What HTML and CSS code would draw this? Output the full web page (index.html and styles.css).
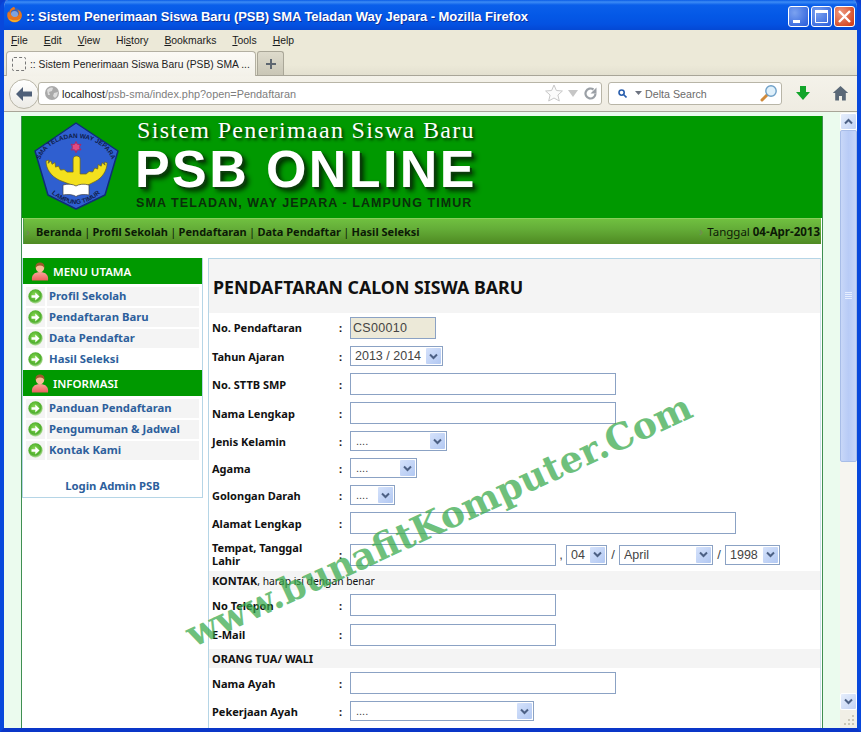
FILE: index.html
```html
<!DOCTYPE html>
<html lang="id">
<head>
<meta charset="utf-8">
<title>:: Sistem Penerimaan Siswa Baru (PSB) SMA Teladan Way Jepara</title>
<link rel="stylesheet" href="styles.css">
</head>
<body>
<svg class="defs" width="0" height="0">
  <defs>
    <radialGradient id="go" cx="45%" cy="40%" r="60%"><stop offset="0" stop-color="#8fdc58"/><stop offset=".7" stop-color="#4faf2c"/><stop offset="1" stop-color="#c5e6b0"/></radialGradient>
    <linearGradient id="skin" x1="0" y1="0" x2="0" y2="1"><stop offset="0" stop-color="#f9a49a"/><stop offset="1" stop-color="#e9605c"/></linearGradient>
    <symbol id="go-ico" viewBox="0 0 15 15"><circle cx="7.500" cy="7.500" r="7.200" fill="url(#go)"/><path d="M3.500 6.300h3.800V3.500l4.200 4-4.200 4V8.700H3.500z" fill="#fff"/></symbol>
    <symbol id="person" viewBox="0 0 20 19"><path d="M2 18.500c-.8-5 2-8.500 8-8.500s8.800 3.500 8 8.500z" fill="url(#skin)"/><circle cx="10" cy="6" r="4.200" fill="#f6bc98"/><path d="M5.600 6.500C5 2.500 7 .5 10 .5s5 2 4.400 6c-.6-2-2-3-4.400-3s-3.800 1-4.400 3z" fill="#9c5a2c"/></symbol>
    <symbol id="chev-d" viewBox="0 0 9 7"><path d="M1 1.500 4.500 5 8 1.500" fill="none" stroke="#4d6185" stroke-width="2"/></symbol>
  </defs>
</svg>
<div class="window">
  <div class="titlebar">
    <svg class="fx" width="18" height="18" viewBox="0 0 18 18"><circle cx="9" cy="9" r="7" fill="#3a62b4"/><circle cx="8.500" cy="8.500" r="3.600" fill="#7fa3de"/><path d="M8 .8c1 1 1.200 2 .6 2.900-2-.2-3.600 1-3.800 3-.2 2.400 1.800 4.400 4.300 4.300 2.300-.1 3.900-1.800 3.700-4-.1-1.500-1-2.600-2-3.300 3 .4 5 2.700 5.100 5.300.1 4-3.300 7.400-7.300 7.300C4.300 16.200 1.200 13 1.200 9.200c0-1.500.4-2.800 1.200-3.900.1.700.4 1.200.9 1.400C3.400 4 5.300 1.600 8 .8z" fill="#e8761c"/><path d="M2.600 12.500c1.500 2.300 4 3.600 6.700 3.400 2.500-.2 4.600-1.700 5.600-4-1.400 1.500-3.400 2.400-5.600 2.400-2.700 0-5-.6-6.700-1.800z" fill="#f5b52e"/></svg>
    <span class="title-text">:: Sistem Penerimaan Siswa Baru (PSB) SMA Teladan Way Jepara - Mozilla Firefox</span>
    <div class="winbtns">
      <span class="winbtn"><svg width="21" height="21" viewBox="0 0 21 21"><rect x="5" y="14" width="7" height="3" fill="#fff"/></svg></span>
      <span class="winbtn"><svg width="21" height="21" viewBox="0 0 21 21"><path d="M4.500 4.500h12v12h-12z" fill="none" stroke="#fff"/><rect x="4" y="4" width="13" height="3" fill="#fff"/></svg></span>
      <span class="winbtn close"><svg width="21" height="21" viewBox="0 0 21 21"><path d="M5 5l11 11M16 5 5 16" stroke="#fff" stroke-width="2.400"/></svg></span>
    </div>
  </div>
  <div class="menubar">
    <span><u>F</u>ile</span><span><u>E</u>dit</span><span><u>V</u>iew</span><span>Hi<u>s</u>tory</span><span><u>B</u>ookmarks</span><span><u>T</u>ools</span><span><u>H</u>elp</span>
  </div>
  <div class="tabstrip">
    <div class="tab"><span class="favicon"></span><span class="tab-label">:: Sistem Penerimaan Siswa Baru (PSB) SMA ...</span></div>
    <div class="newtab"><svg width="12" height="12" viewBox="0 0 12 12"><path d="M6 1v10M1 6h10" stroke="#5d6670" stroke-width="2"/></svg></div>
  </div>
  <div class="navbar">
    <span class="back"><svg width="18" height="16" viewBox="0 0 18 16"><path d="M8 1 1 8l7 7V10.500h9v-5H8z" fill="#4f6079"/></svg></span>
    <div class="urlbar">
      <svg class="globe" width="16" height="16" viewBox="0 0 16 16"><circle cx="8" cy="8" r="7" fill="#a9a9a9"/><path d="M3 5c2-2 4-3 6-2l-1 3-3 1 1 3-2 0zM10 8l4-1-1 4-2 2-2-2z" fill="#dcdcdc"/></svg>
      <span class="url"><span class="url-host">localhost</span>/psb-sma/index.php?open=Pendaftaran</span>
      <svg class="star" width="18" height="18" viewBox="0 0 18 18"><path d="m9 1 2.400 5.500 6 .5-4.500 4 1.400 6L9 14l-5.300 3 1.400-6L.6 7l6-.5z" fill="#fbfbfb" stroke="#c8c8c8"/></svg>
      <svg class="drop" width="10" height="7" viewBox="0 0 10 7"><path d="M0 0h10L5 7z" fill="#c6c6c6"/></svg>
      <svg class="reload" width="13" height="13" viewBox="0 0 13 13"><path d="M11.500 6.500a5 5 0 1 1-2-4" fill="none" stroke="#9ba0a6" stroke-width="2.200"/><path d="M12.500 .5v6h-6z" fill="#9ba0a6"/></svg>
    </div>
    <div class="searchbar">
      <svg class="engine" width="9" height="9" viewBox="0 0 9 9"><circle cx="3.600" cy="3.600" r="2.600" fill="none" stroke="#2a5fae" stroke-width="1.600"/><path d="m5.500 5.500 3 3" stroke="#2a5fae" stroke-width="1.600"/></svg>
      <svg class="engine-drop" width="7" height="4" viewBox="0 0 7 4"><path d="M0 0h7L3.500 4z" fill="#6d7380"/></svg>
      <span class="search-text">Delta Search</span>
      <svg class="lens" width="18" height="18" viewBox="0 0 18 18"><path d="M7 11 2 16" stroke="#d08a3a" stroke-width="3" stroke-linecap="round"/><circle cx="11" cy="7" r="5.200" fill="#dff0fb" stroke="#6fa0c8" stroke-width="1.400"/></svg>
    </div>
    <svg class="dl" width="16" height="16" viewBox="0 0 16 16"><path d="M5 1h6v6h4l-7 8-7-8h4z" fill="#12a52a"/></svg>
    <svg class="home" width="17" height="16" viewBox="0 0 17 16"><path d="M8.500 1 .8 8h2.400v7.500h3.800v-4.500h3v4.500h3.800V8h2.400z" fill="#5a6877"/></svg>
  </div>
  <div class="viewport">
    <div class="canvas">
      <div class="page">
        <header class="banner">
          <svg class="logo" width="92" height="92" viewBox="0 0 92 92">
            <path d="M45 2 87 30 74 74 45 88 17 74 4 30z" fill="#2f5fd0" stroke="#0f2c78" stroke-width="1.500" stroke-linejoin="round"/>
            <path id="arcTop" d="M8 46A37 29 0 0 1 82 46" fill="none"/>
            <path id="arcBot" d="M16 68Q45 98 74 68" fill="none"/>
            <text class="logo-text"><textPath href="#arcTop" startOffset="50%">SMA TELADAN WAY JEPARA</textPath></text>
            <text class="logo-text"><textPath href="#arcBot" startOffset="50%">LAMPUNG TIMUR</textPath></text>
            <circle cx="45" cy="26" r="3.600" fill="#e04a80"/>
            <path d="M45 20.500l1.500 3 3.500-.2-1.600 2.800 1.600 2.800-3.500-.2-1.500 3-1.500-3-3.500.2 1.600-2.800-1.600-2.800 3.500.2z" fill="none" stroke="#c41e50" stroke-width=".8"/>
            <path d="M15 40c1-.5 2-.8 3-.7l-1 3 3-2.500 1 3.500 3-1.700.5 4.500 3-1 2 4 3.600-.5 3 2.500h4l2 0V38c0-4 7-4 7 0v15h6l3-2.500 3.600.5 2-4 3 1 .5-4.500 3 1.700 1-3.500 3 2.500-1-3c1-.1 2 .2 3 .7-.5 8-5 15-12 18.500l-13 6.500h-3L28 59C20 55 15 48 15 40z" fill="#f3e01e" stroke="#6f6410" stroke-width=".7" stroke-linejoin="round"/>
            <path d="M32 64c5-1.500 10-.8 13 1 3-1.800 8-2.500 13-1v10c-5-1-10-.5-13 1.500-3-2-8-2.500-13-1.500z" fill="#fff" stroke="#444" stroke-width=".7"/>
          </svg>
          <div class="banner-text">
            <div class="banner-top">Sistem Penerimaan Siswa Baru</div>
            <div class="banner-main">PSB ONLINE</div>
            <div class="banner-sub">SMA TELADAN, WAY JEPARA - LAMPUNG TIMUR</div>
          </div>
        </header>
        <nav class="topnav">
          <div class="topnav-links"><i class="chev">›</i><span>Beranda</span><b>|</b><span>Profil Sekolah</span><b>|</b><span>Pendaftaran</span><b>|</b><span>Data Pendaftar</span><b>|</b><span>Hasil Seleksi</span></div>
          <div class="topnav-date"><i class="chev">›</i>Tanggal <strong>04-Apr-2013</strong></div>
        </nav>
        <div class="columns">
          <aside class="sidebar">
            <div class="side-head"><svg width="20" height="19"><use href="#person"/></svg>MENU UTAMA</div>
            <div class="side-item"><span class="ico"><svg width="15" height="15"><use href="#go-ico"/></svg></span><a>Profil Sekolah</a></div>
            <div class="side-item"><span class="ico"><svg width="15" height="15"><use href="#go-ico"/></svg></span><a>Pendaftaran Baru</a></div>
            <div class="side-item"><span class="ico"><svg width="15" height="15"><use href="#go-ico"/></svg></span><a>Data Pendaftar</a></div>
            <div class="side-item plain"><span class="ico"><svg width="15" height="15"><use href="#go-ico"/></svg></span><a>Hasil Seleksi</a></div>
            <div class="side-head"><svg width="20" height="19"><use href="#person"/></svg>INFORMASI</div>
            <div class="side-item"><span class="ico"><svg width="15" height="15"><use href="#go-ico"/></svg></span><a>Panduan Pendaftaran</a></div>
            <div class="side-item"><span class="ico"><svg width="15" height="15"><use href="#go-ico"/></svg></span><a>Pengumuman &amp; Jadwal</a></div>
            <div class="side-item"><span class="ico"><svg width="15" height="15"><use href="#go-ico"/></svg></span><a>Kontak Kami</a></div>
            <a class="login">Login Admin PSB</a>
          </aside>
          <main class="main">
            <h1 class="main-title">PENDAFTARAN CALON SISWA BARU</h1>
            <form class="form">
              <label>No. Pendaftaran</label><span class="colon">:</span><div><input class="inp w86 ro" value="CS00010" readonly></div>
              <label>Tahun Ajaran</label><span class="colon">:</span><div><span class="sel w93"><select><option>2013 / 2014</option></select><span class="arr"><svg width="9" height="7"><use href="#chev-d"/></svg></span></span></div>
              <label>No. STTB SMP</label><span class="colon">:</span><div><input class="inp w266"></div>
              <label>Nama Lengkap</label><span class="colon">:</span><div><input class="inp w266"></div>
              <label>Jenis Kelamin</label><span class="colon">:</span><div><span class="sel w97"><select class="dots"><option>....</option></select><span class="arr"><svg width="9" height="7"><use href="#chev-d"/></svg></span></span></div>
              <label>Agama</label><span class="colon">:</span><div><span class="sel w67"><select class="dots"><option>....</option></select><span class="arr"><svg width="9" height="7"><use href="#chev-d"/></svg></span></span></div>
              <label>Golongan Darah</label><span class="colon">:</span><div><span class="sel w45"><select class="dots"><option>....</option></select><span class="arr"><svg width="9" height="7"><use href="#chev-d"/></svg></span></span></div>
              <label>Alamat Lengkap</label><span class="colon">:</span><div><input class="inp w386"></div>
              <label class="label-two">Tempat, Tanggal Lahir</label><span class="colon">:</span>
              <div class="date-row"><input class="inp w206"><span class="sep sep-c">,</span><span class="sel w41"><select><option>04</option></select><span class="arr"><svg width="9" height="7"><use href="#chev-d"/></svg></span></span><span class="sep">/</span><span class="sel w94"><select><option>April</option></select><span class="arr"><svg width="9" height="7"><use href="#chev-d"/></svg></span></span><span class="sep">/</span><span class="sel w55"><select><option>1998</option></select><span class="arr"><svg width="9" height="7"><use href="#chev-d"/></svg></span></span></div>
              <div class="band"><strong>KONTAK</strong><span class="band-note">, harap isi dengan benar</span></div>
              <label>No Telepon</label><span class="colon">:</span><div><input class="inp w206"></div>
              <label>E-Mail</label><span class="colon">:</span><div><input class="inp w206"></div>
              <div class="band"><strong>ORANG TUA/ WALI</strong></div>
              <label>Nama Ayah</label><span class="colon">:</span><div><input class="inp w266"></div>
              <label>Pekerjaan Ayah</label><span class="colon">:</span><div><span class="sel w184"><select class="dots"><option>....</option></select><span class="arr"><svg width="9" height="7"><use href="#chev-d"/></svg></span></span></div>
            </form>
          </main>
        </div>
      </div>
      <div class="watermark">www.bunafitKomputer.Com</div>
    </div>
    <div class="scrollbar">
      <span class="sb-btn"><svg width="9" height="7" viewBox="0 0 9 7"><path d="M1 5.500 4.500 2 8 5.500" fill="none" stroke="#4d6185" stroke-width="2"/></svg></span>
      <span class="sb-thumb"><svg width="7" height="8" viewBox="0 0 7 8"><path d="M0 .5h7M0 2.500h7M0 4.500h7M0 6.500h7" stroke="#e6eeff"/></svg></span>
      <span class="sb-track"></span>
      <span class="sb-btn"><svg width="9" height="7"><use href="#chev-d"/></svg></span>
      <span class="sb-corner"><svg width="11" height="11" viewBox="0 0 11 11"><path d="M8 1h2v2H8zM4 5h2v2H4zM8 5h2v2H8zM0 9h2v2H0zM4 9h2v2H4zM8 9h2v2H8z" fill="#c9c6b8"/></svg></span>
    </div>
  </div>
</div>
</body>
</html>
```

FILE: styles.css
```css
* { box-sizing: border-box; }
html, body { margin: 0; padding: 0; height: 732px; overflow: hidden; }
body { font-family: "Noto Sans", sans-serif; background: #0a3fd0; }
.defs { display: block; height: 0; }

.window {
  width: 861px; height: 732px;
  border: 4px solid #0848dc; border-top: 0;
  border-bottom-color: #0a36c8;
  border-radius: 8px 8px 0 0;
  display: flex; flex-direction: column; overflow: hidden;
  background: #ece9d8;
}

/* title bar */
.titlebar {
  height: 30px; flex: none; margin: 0 -4px;
  padding: 0 6px 0 6px;
  background: linear-gradient(#0a5be6 0, #3d8cf5 2px, #0a5fea 5px, #0458e6 16px, #0452e2 24px, #0448d4 30px);
  display: flex; align-items: center; position: relative;
}
.fx { flex: none; }
.title-text {
  color: #fff; font: bold 13px "Liberation Sans", sans-serif; letter-spacing: -.05px;
  margin-left: 2px; padding-top: 2px; text-shadow: 1px 1px 0 #0a2f9c; white-space: nowrap;
}
.winbtns { display: flex; gap: 2px; margin-left: auto; margin-top: 2px; }
.winbtn {
  width: 21px; height: 21px; border: 1px solid #fff; border-radius: 3px;
  background: radial-gradient(circle at 30% 30%, #7ba2f0, #2f62dc 90%);
  display: block; overflow: hidden;
}
.winbtn svg { display: block; margin: -1px; }
.winbtn.close { background: radial-gradient(circle at 30% 30%, #ee9a80, #d2421c 85%); }

/* menu */
.menubar {
  height: 20px; flex: none; display: flex; gap: 16px; align-items: center;
  padding-left: 7px; font: 10.400px "Liberation Sans", sans-serif; color: #1a1a1a;
}
.tabstrip {
  height: 26px; flex: none; display: flex; align-items: flex-end;
  padding-left: 2px; gap: 1px; border-bottom: 1px solid #a8a598;
  background: linear-gradient(#ece9d8 60%, #e3e0d0);
}
.tab {
  width: 250px; height: 25px; margin-bottom: -1px;
  background: linear-gradient(#fbfaf6, #f3f1e9);
  border: 1px solid #b3b0a2; border-bottom: 0; border-radius: 4px 4px 0 0;
  display: flex; align-items: center; padding-left: 5px; gap: 4px;
  font: 10.300px "Liberation Sans", sans-serif; color: #222; white-space: nowrap; overflow: hidden;
}
.favicon { width: 14px; height: 14px; border: 1px dashed #777; border-radius: 2px; flex: none; }
.newtab {
  width: 27px; height: 24px; background: linear-gradient(#dedbcc, #c9c6b6);
  border: 1px solid #aaa798; border-bottom: 0; border-radius: 3px 3px 0 0;
  display: flex; align-items: center; justify-content: center;
}

/* nav bar */
.navbar {
  height: 36px; flex: none; position: relative;
  background: linear-gradient(#f4f2ea, #efece2);
  border-bottom: 1px solid #a8a598;
  display: flex; align-items: center;
  padding-left: 34px; padding-bottom: 1px;
}
.back {
  position: absolute; left: 5px; top: 3px; width: 30px; height: 30px; z-index: 1;
  border-radius: 50%; background: linear-gradient(#fff, #ecebe6); border: 1px solid #b9b6a8;
  display: flex; align-items: center; justify-content: center;
}
.urlbar {
  width: 564px; height: 23px; background: #fff; border: 1px solid #b8b5a7; border-radius: 3px;
  display: flex; align-items: center; padding-left: 5px; margin-right: 6px;
}
.globe { flex: none; }
.url { margin-left: 2px; padding-top: 2px; font: 10.900px "Liberation Sans", sans-serif; color: #7d7d7d; flex: 1; white-space: nowrap; }
.url-host { color: #222; }
.star { margin-right: 5px; }
.drop { margin-right: 6px; }
.reload { margin-right: 4px; }
.searchbar {
  width: 174px; height: 23px; background: #fff; border: 1px solid #b8b5a7; border-radius: 3px;
  display: flex; align-items: center; padding-left: 9px;
}
.engine-drop { margin-left: 8px; }
.search-text { margin-left: 3px; padding-top: 2px; font: 10.700px "Liberation Sans", sans-serif; color: #6b6b6b; flex: 1; }
.lens { margin-right: 3px; }
.dl { margin-left: 13px; }
.home { margin-left: 21px; }

/* viewport */
.viewport { flex: 1; min-height: 0; display: flex; background: #ebfbee; }
.canvas { width: 836px; flex: none; position: relative; overflow: hidden; padding: 4px 0 0 17px; }
.page {
  width: 802px; height: 700px; background: #fff;
  border-left: 1px solid #3f8f52; border-right: 1px solid #3f8f52;
}
.banner { height: 102px; background: #009900; display: flex; }
.logo { flex: none; margin: 5px 0 0 9px; }
.banner-text { margin-left: 12px; color: #fff; padding-top: 1px; }
.banner-top {
  font: 24px/27px "Liberation Serif", serif; letter-spacing: 1.330px; padding-left: 2px;
  text-shadow: 2px 2px 3px #003300;
}
.banner-main {
  font: bold 52px/46px "Liberation Sans", sans-serif; letter-spacing: 2.400px; margin-top: 2px;
  text-shadow: 2px 2px 0 #0b3d0b, 4px 4px 5px #002a00;
}
.banner-sub {
  font: bold 12.500px/16px "Liberation Sans", sans-serif; letter-spacing: 1.070px; color: #0a2e0a;
  margin-top: 3px; padding-left: 1px;
}
.logo-text { font: bold 6.400px "Liberation Sans", sans-serif; fill: #10204a; text-anchor: middle; }
.topnav {
  height: 26px; margin: 0 1px 0 1px;
  background: linear-gradient(#70c040 0, #64ad38 40%, #4f8a22 100%);
  display: flex; justify-content: space-between; align-items: center;
  font-size: 11.500px; color: #0c1a06; border-left: 1px solid #4a9a4a; border-top: 1px solid #87cf5a;
}
.topnav-links { display: flex; align-items: center; font-weight: 700; font-size: 11px; }
.topnav-links b { font-weight: 400; margin: 0 2.300px; }
.chev { font-style: normal; color: #6f8f4f; font-weight: 700; }
.topnav-links .chev { width: 10px; margin-left: 2px; }
.topnav-date strong { font-weight: 700; }
.topnav-date { padding-right: 1px; }
.topnav-date .chev { margin-right: 4px; }

.columns { display: flex; margin-top: 14px; align-items: flex-start; gap: 5px; }
.sidebar {
  width: 181px; height: 240px; border: 1px solid #b5d5e6; border-top: 0;
  display: flex; flex-direction: column; font-size: 11.300px;
}
.side-head {
  height: 26px; background: #009900; color: #fff; font-weight: 600; font-size: 11.500px;
  display: flex; align-items: center; gap: 3px; padding-left: 7px; flex: none; margin-bottom: 2px;
}
.side-item { height: 21px; display: flex; gap: 2px; padding: 1px 3px 1px 3px; flex: none; }
.ico { width: 19px; background: #f4f4f4; display: flex; align-items: center; justify-content: center; flex: none; }
.side-item a { flex: 1; background: #f4f4f4; color: #2d5f9c; font-weight: 700; line-height: 17px; padding-left: 2px; }
.side-item.plain .ico, .side-item.plain a { background: transparent; }
.login { margin-top: 17px; text-align: center; font-weight: 700; color: #2d5f9c; }

.main { width: 613px; height: 470px; border-left: 1px solid #b5d5e6; border-right: 1px solid #cfe2ec; border-top: 1px solid #b5d5e6; }
.main-title {
  margin: 0; height: 54px; background: #f4f4f4; color: #111;
  font: 700 17.800px/56px "Noto Sans", sans-serif; padding-left: 4px;
}
.form {
  display: grid; grid-template-columns: 130px 11px 1fr;
  grid-template-rows: 29px 28px 28px 30px 26px 28px 26px 30px 33px 19px 30px 29px 19px 30px 26px;
  align-items: center; font-size: 11px; color: #111;
}
.form > div:not(.band) { display: flex; align-items: center; }
.form label { padding-left: 3px; font-weight: 700; line-height: 13px; padding-right: 14px; }
.form .label-two { padding-bottom: 2px; }
.colon { font-weight: 700; }
.band {
  grid-column: 1 / -1; align-self: stretch; background: #f4f4f4; padding-left: 3px; line-height: 19px;
}
.band-note { font-size: 10.300px; }
.inp {
  height: 22px; border: 1px solid #8ba2c4; background: #fff; padding: 0 2px; margin: 0;
  font: 12.500px "Liberation Sans", sans-serif; letter-spacing: .3px; color: #444; display: block; outline: 0;
}
.ro { background: #ece9d8; }
.w86 { width: 86px; } .w266 { width: 266px; } .w386 { width: 386px; } .w206 { width: 206px; }
.sel { position: relative; display: block; height: 20px; flex: none; }
.w93 { width: 93px; } .w97 { width: 97px; } .w67 { width: 67px; } .w45 { width: 45px; }
.w41 { width: 41px; } .w94 { width: 94px; } .w55 { width: 55px; } .w184 { width: 184px; }
.sel select {
  appearance: none; -webkit-appearance: none; width: 100%; height: 20px; border: 1px solid #8ba2c4;
  background: #fff; border-radius: 0; padding: 0 0 0 4px; margin: 0; outline: 0;
  font: 12.500px "Liberation Sans", sans-serif; color: #444;
}
.sel select.dots { font-size: 11px; padding-left: 5px; }
.arr {
  position: absolute; right: 2px; top: 2px; width: 15px; height: 16px;
  background: linear-gradient(135deg, #d5e2fb, #b2c8f2); border-radius: 1px;
  display: flex; align-items: center; justify-content: center;
}
.sep { width: 12px; text-align: center; font: 13px "Liberation Sans", sans-serif; color: #444; }
.sep-c { width: 10px; }

.watermark {
  position: absolute; left: 145px; top: 384px; width: 580px; text-align: center;
  font: bold 36.300px/50px "DejaVu Serif", serif; color: #37a94a; opacity: .72;
  white-space: nowrap; transform: rotate(-24.800deg); pointer-events: none;
}

/* scrollbar */
.scrollbar { width: 17px; flex: none; display: flex; flex-direction: column; background: #f6f5f0; padding-top: 1px; }
.sb-btn {
  height: 17px; flex: none; display: flex; align-items: center; justify-content: center;
  background: linear-gradient(135deg, #e6eefc, #c2d2f4); border: 1px solid #fff; border-radius: 2px;
}
.sb-thumb {
  height: 332px; flex: none; background: linear-gradient(90deg, #c8d7f8, #b8cbf6 50%, #c6d5f8);
  border: 1px solid #a8bde8; border-radius: 2px; display: flex; align-items: center; justify-content: center;
}
.sb-track { flex: 1; }
.sb-corner { height: 18px; flex: none; background: #f1efe6; display: flex; align-items: flex-end; justify-content: flex-end; padding: 0 2px 3px 0; }
```
